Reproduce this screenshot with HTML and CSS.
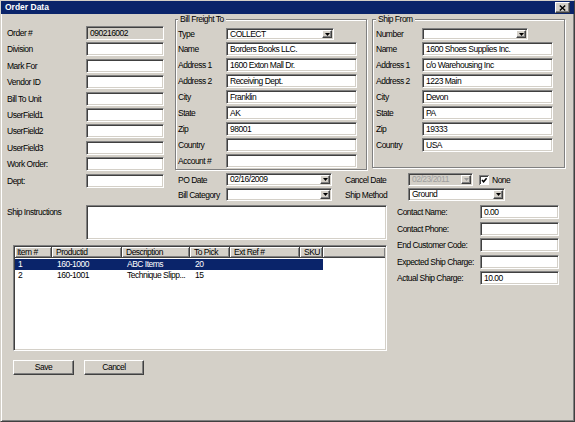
FILE: index.html
```html
<!DOCTYPE html>
<html>
<head>
<meta charset="utf-8">
<link rel="stylesheet" href="styles.css">
</head>
<body>
<div class="window">
  <div class="titlebar">
    <span class="title">Order Data</span>
    <span class="close"><svg width="7" height="6" viewBox="0 0 7 6"><path d="M0.8 0.5 L6.2 5.5 M6.2 0.5 L0.8 5.5" stroke="#000" stroke-width="1.4" fill="none"/></svg></span>
  </div>
  <div class="body">
    <div class="top">
      <div class="leftcol">
        <span>Order #</span><div class="in ro">090216002</div>
        <span>Division</span><div class="in"></div>
        <span>Mark For</span><div class="in"></div>
        <span>Vendor ID</span><div class="in"></div>
        <span>Bill To Unit</span><div class="in"></div>
        <span>UserField1</span><div class="in"></div>
        <span>UserField2</span><div class="in"></div>
        <span>UserField3</span><div class="in"></div>
        <span>Work Order:</span><div class="in"></div>
        <span>Dept:</span><div class="in"></div>
      </div>
      <div class="rightpart">
        <div class="groups">
          <fieldset class="group g1">
            <legend>Bill Freight To</legend>
            <div class="fgrid">
              <span>Type</span>
              <div class="select w108"><span class="val">COLLECT</span><span class="btn"><svg width="5" height="3" viewBox="0 0 5 3"><polygon points="0,0 5,0 2.5,3" fill="#000"/></svg></span></div>
              <span>Name</span><div class="in">Borders Books LLC.</div>
              <span>Address 1</span><div class="in">1600 Exton Mall Dr.</div>
              <span>Address 2</span><div class="in">Receiving Dept.</div>
              <span>City</span><div class="in">Franklin</div>
              <span>State</span><div class="in">AK</div>
              <span>Zip</span><div class="in">98001</div>
              <span>Country</span><div class="in"></div>
              <span>Account #</span><div class="in"></div>
            </div>
          </fieldset>
          <fieldset class="group g2">
            <legend>Ship From</legend>
            <div class="fgrid">
              <span>Number</span>
              <div class="select w106"><span class="val"></span><span class="btn"><svg width="5" height="3" viewBox="0 0 5 3"><polygon points="0,0 5,0 2.5,3" fill="#000"/></svg></span></div>
              <span>Name</span><div class="in">1600 Shoes Supplies Inc.</div>
              <span>Address 1</span><div class="in">c/o Warehousing Inc</div>
              <span>Address 2</span><div class="in">1223 Main</div>
              <span>City</span><div class="in">Devon</div>
              <span>State</span><div class="in">PA</div>
              <span>Zip</span><div class="in">19333</div>
              <span>Country</span><div class="in">USA</div>
            </div>
          </fieldset>
        </div>
        <div class="dates">
          <div class="drow">
            <span class="dl1">PO Date</span>
            <div class="select dsel w106"><span class="val">02/16/2009</span><span class="btn"><svg width="5" height="3" viewBox="0 0 5 3"><polygon points="0,0 5,0 2.5,3" fill="#000"/></svg></span></div>
            <span class="dl2">Cancel Date</span>
            <div class="select dsel w65 disabled"><span class="val">02/23/2011</span><span class="btn"><svg width="5" height="3" viewBox="0 0 5 3"><polygon points="0,0 5,0 2.5,3" fill="#9a9a9a"/></svg></span></div>
            <svg class="chk" width="10" height="10" viewBox="0 0 10 10"><rect x="0" y="0" width="10" height="10" fill="#808080"/><rect x="1" y="1" width="9" height="9" fill="#fff"/><rect x="1" y="1" width="8" height="8" fill="#404040"/><rect x="2" y="2" width="7" height="7" fill="#fff"/><polyline points="3,5 4.6,6.8 7.6,3.2" fill="none" stroke="#000" stroke-width="1.5"/></svg>
            <span class="none">None</span>
          </div>
          <div class="drow">
            <span class="dl1">Bill Category</span>
            <div class="select dsel w106"><span class="val"></span><span class="btn"><svg width="5" height="3" viewBox="0 0 5 3"><polygon points="0,0 5,0 2.5,3" fill="#000"/></svg></span></div>
            <span class="dl2">Ship Method</span>
            <div class="select dsel w97"><span class="val">Ground</span><span class="btn"><svg width="5" height="3" viewBox="0 0 5 3"><polygon points="0,0 5,0 2.5,3" fill="#000"/></svg></span></div>
          </div>
        </div>
      </div>
    </div>
    <div class="bottom">
      <div class="lb">
        <div class="instr">
          <span class="ilbl">Ship Instructions</span>
          <div class="ta"></div>
        </div>
        <div class="list">
          <div class="lhead">
            <span class="hc c1">Item #</span>
            <span class="hc c2">Productid</span>
            <span class="hc c3">Description</span>
            <span class="hc c4">To Pick</span>
            <span class="hc c5">Ext Ref #</span>
            <span class="hc c6">SKU</span>
            <span class="hc hfill"></span>
          </div>
          <div class="lrow sel">
            <span class="c1">1</span><span class="c2">160-1000</span><span class="c3">ABC Items</span><span class="c4">20</span><span class="c5"></span><span class="c6"></span>
          </div>
          <div class="lrow">
            <span class="c1">2</span><span class="c2">160-1001</span><span class="c3">Technique Slipp...</span><span class="c4">15</span><span class="c5"></span><span class="c6"></span>
          </div>
        </div>
        <div class="buttons">
          <div class="button save">Save</div>
          <div class="button cancel">Cancel</div>
        </div>
      </div>
      <div class="rf">
        <span>Contact Name:</span><div class="in">0.00</div>
        <span>Contact Phone:</span><div class="in"></div>
        <span>End Customer Code:</span><div class="in"></div>
        <span>Expected Ship Charge:</span><div class="in"></div>
        <span>Actual Ship Charge:</span><div class="in">10.00</div>
      </div>
    </div>
  </div>
</div>
</body>
</html>
```
FILE: styles.css
```css
* { box-sizing: border-box; }
html, body { margin: 0; padding: 0; background: #d4d0c8; }
body {
  font-family: "Liberation Sans", Arial, sans-serif;
  font-size: 8.5px;
  letter-spacing: -0.5px;
  color: #000;
}
.window {
  width: 575px;
  height: 422px;
  background: #d4d0c8;
  border: 1px solid;
  border-color: #d4d0c8 #404040 #404040 #d4d0c8;
  box-shadow: inset 1px 1px 0 #fff, inset -1px -1px 0 #808080;
  overflow: hidden;
}
.titlebar {
  height: 13px;
  background: #0a246a;
  display: flex;
  align-items: center;
  justify-content: space-between;
  padding: 0 4px 0 4px;
}
.title {
  color: #fff;
  font-weight: bold;
  letter-spacing: 0;
  line-height: 13px;
}
.close {
  width: 15px;
  height: 11px;
  background: #d4d0c8;
  border: 1px solid;
  border-color: #fff #404040 #404040 #fff;
  box-shadow: inset -1px -1px 0 #808080;
  display: flex;
  align-items: center;
  justify-content: center;
}
.body { padding-left: 6px; }
.top { display: flex; align-items: flex-start; }
.leftcol {
  width: 157px;
  margin-right: 11px;
  padding-top: 12px;
  display: grid;
  grid-template-columns: 79px 78px;
  grid-auto-rows: 14px;
  row-gap: 2.4px;
  align-items: center;
}
.in {
  height: 14px;
  background: #fff;
  border: 1px solid;
  border-color: #808080 #fff #fff #808080;
  box-shadow: inset 1px 1px 0 #404040, inset -1px -1px 0 #d4d0c8;
  padding-left: 3px;
  line-height: 12px;
  white-space: nowrap;
  overflow: hidden;
}
.ro { background: #d4d0c8; }
.rightpart { width: 390px; }
.groups { display: flex; align-items: flex-start; gap: 5px; }
fieldset.group {
  margin: 0;
  min-width: 0;
  border: 1px solid #808080;
  box-shadow: inset 1px 1px 0 #fff, 1px 1px 0 #fff;
}
fieldset.group legend {
  padding: 0 2px;
  line-height: 11px;
  background: #d4d0c8;
}
.g1 { width: 192px; padding: 3px 9px 1px 2px; }
.g2 { width: 193px; padding: 3px 11px 15px 3px; }
.fgrid {
  display: grid;
  grid-template-columns: 48px 131px;
  grid-template-rows: 12px;
  grid-auto-rows: 14px;
  row-gap: 2px;
  align-items: center;
}
.g2 .fgrid { grid-template-columns: 46px 131px; }
.select {
  height: 12px;
  display: flex;
  background: #fff;
  border: 1px solid;
  border-color: #808080 #fff #fff #808080;
  box-shadow: inset 1px 1px 0 #404040, inset -1px -1px 0 #d4d0c8;
  padding: 1px 1px 1px 1px;
}
.select .val {
  flex: 1;
  padding-left: 2px;
  line-height: 8px;
  white-space: nowrap;
  overflow: hidden;
}
.select .btn {
  width: 10px;
  background: #d4d0c8;
  border: 1px solid;
  border-color: #fff #404040 #404040 #fff;
  box-shadow: inset -1px -1px 0 #808080;
  display: flex;
  align-items: center;
  justify-content: center;
}
.select .btn svg { display: block; }
.w108 { width: 108px; }
.w106 { width: 106px; }
.w97 { width: 97px; }
.w65 { width: 65px; }
.dsel { height: 13px; }
.dsel .val { line-height: 9px; }
.disabled { background: #d4d0c8; }
.disabled .val { color: #a0a0a0; }
.dates {
  margin-top: 3px;
  padding-left: 3px;
  display: flex;
  flex-direction: column;
  gap: 2px;
}
.drow { display: flex; align-items: center; height: 13px; }
.dl1 { width: 48px; }
.dl2 { width: 63px; margin-left: 13px; }
.chk { display: block; margin-left: 6px; }
.none { margin-left: 3px; }
.bottom { display: flex; align-items: flex-start; margin-top: 4px; }
.lb { width: 380px; }
.instr { display: flex; height: 35px; }
.ilbl { width: 79px; padding-top: 2px; line-height: 11px; }
.ta {
  width: 301px;
  height: 35px;
  background: #fff;
  border: 1px solid;
  border-color: #808080 #fff #fff #808080;
  box-shadow: inset 1px 1px 0 #404040, inset -1px -1px 0 #d4d0c8;
}
.list {
  margin: 5px 0 0 6px;
  width: 374px;
  height: 106px;
  background: #fff;
  border: 1px solid;
  border-color: #808080 #fff #fff #808080;
  box-shadow: inset 1px 1px 0 #404040, inset -1px -1px 0 #d4d0c8;
  padding: 1px;
}
.lhead { display: flex; height: 11px; background: #d4d0c8; }
.hc {
  height: 11px;
  line-height: 10px;
  padding-left: 4px;
  border-right: 1px solid #404040;
  border-bottom: 1px solid #404040;
  box-shadow: inset 1px 1px 0 #fff, inset -1px -1px 0 #808080;
  white-space: nowrap;
  overflow: hidden;
}
.lhead .c1 { padding-left: 2px; }
.hfill { flex: 1; border-right: none; }
.c1 { width: 37px; }
.c2 { width: 70px; }
.c3 { width: 68px; }
.c4 { width: 40px; }
.c5 { width: 70px; }
.c6 { width: 23px; }
.lrow { display: flex; width: 308px; height: 11px; line-height: 11px; margin-top: 0; }
.lhead + .lrow { margin-top: 1px; }
.lrow span { padding-left: 5px; white-space: nowrap; overflow: hidden; }
.lrow .c1 { padding-left: 3px; }
.sel { background: #0a246a; color: #fff; }
.buttons { display: flex; gap: 10px; margin: 9px 0 0 6px; }
.button {
  height: 15px;
  line-height: 13px;
  text-align: center;
  border: 1px solid;
  border-color: #fff #404040 #404040 #fff;
  box-shadow: inset -1px -1px 0 #808080;
}
.save { width: 61px; }
.cancel { width: 60px; }
.rf {
  margin-left: 10px;
  display: grid;
  grid-template-columns: 83px 79px;
  grid-auto-rows: 14px;
  row-gap: 2.5px;
  align-items: center;
}
```
